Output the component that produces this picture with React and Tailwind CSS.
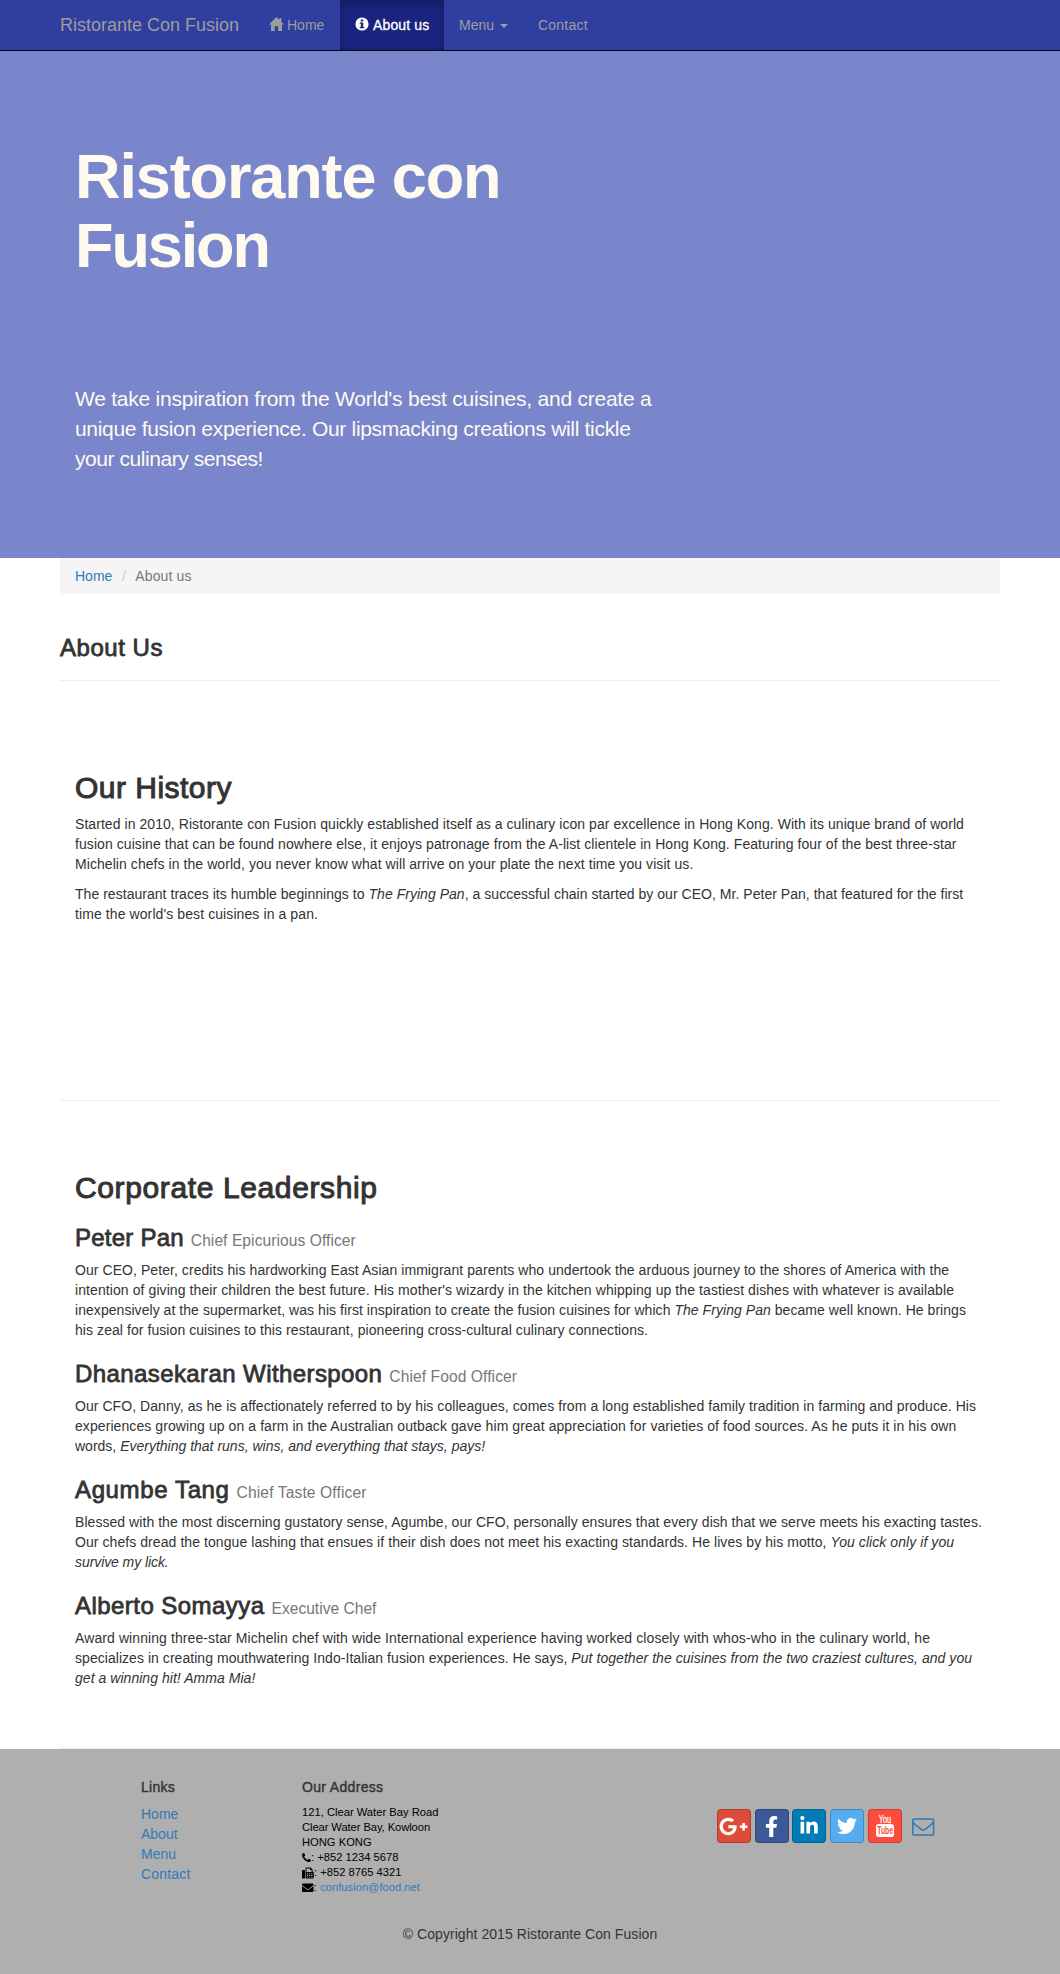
import React from "react";
import { FaFacebookF, FaGooglePlusG, FaLinkedinIn, FaTwitter, FaEnvelope } from "react-icons/fa";

function HomeIcon() {
  return (
    <svg viewBox="0 0 15 14" className="h-[14px] w-[15px] shrink-0" fill="currentColor">
      <path d="M7.5 0 0 7.6h2V14h3.7V9.2h3.4V14h3.9V7.6h2L12.4 5V1h-2v2z" />
    </svg>
  );
}

function InfoIcon() {
  return (
    <svg viewBox="0 0 14 14" className="h-[14px] w-[14px] shrink-0" fill="currentColor">
      <path fillRule="evenodd" d="M7 .4a6.6 6.6 0 1 0 0 13.2A6.6 6.6 0 0 0 7 .4zM5.8 2.4h2.4v2.1H5.8zM4.7 5.5h3.5v4.4h1.1v1.3H4.7V9.9h1.1V6.8H4.7z" />
    </svg>
  );
}

function PhoneIcon() {
  return (
    <svg viewBox="192 128 1408 1408" className="h-[9px] w-[9px]" fill="currentColor">
      <path d="M1600 1240q0 27-10 70.5t-21 68.5q-21 50-122 106-94 51-186 51-27 0-53-3.5t-57.5-12.5-47-14.5T1048 1485.5t-49-18.5q-98-35-175-83-127-79-264-216T344 904q-48-77-83-175-3-9-18-49t-20.5-55.5T208 577t-12.5-57.5T192 466q0-92 51-186 56-101 106-122 25-11 68.5-21t70.5-10q14 0 21 3 18 6 53 76 11 19 30 54t35 63.5 31 53.5q3 4 17.5 25t21.5 35.5 7 28.5q0 20-28.5 50t-62 55-62 53-28.5 46q0 9 5 22.5t8.5 20.5 14 24 11.5 19q76 137 174 235t235 174q2 1 19 11.5t24 14 20.5 8.5 22.5 5q18 0 46-28.5t53-62 55-62 50-28.5q14 0 28.5 7t35.5 21.5 25 17.5q25 15 53.5 31t63.5 35 54 30q70 35 76 53 3 7 3 21z" />
    </svg>
  );
}

function FaxIcon() {
  return (
    <svg viewBox="0 0 12 12" className="h-[12px] w-[12px]" fill="currentColor">
      <path d="M.8 3h1.4q.8 0 .8.8v6.9q0 .8-.8.8H.8q-.8 0-.8-.8V3.800Q0 3 .8 3z" />
      <path fillRule="evenodd" d="M3.6.5h5l1.900 1.900V4.500q1.300.3 1.300 1.300v4.500q0 1.200-1.200 1.200H3.600zM4.500 1.400v3.600h5.100V3.100H8V1.400zM5 6.200v1h1.200v-1zm2.100 0v1h1.200v-1zm2.100 0v1h1.200v-1zM5 8v1h1.200V8zm2.100 0v1h1.200V8zm2.100 0v1h1.200V8zM5 9.700v.9h1.200v-.9zm2.100 0v.9h1.200v-.9zm2.100 0v.9h1.200v-.9z" />
    </svg>
  );
}

function EnvelopeOutline() {
  return (
    <svg viewBox="0 0 1792 1792" className="h-[22.400px] w-[22.400px]" fill="currentColor">
      <path d="M1664 1504V736q-32 36-69 66-268 206-426 338-51 43-83 67t-86.500 48.500T897 1280h-2q-48 0-102.500-24.500T706 1207t-83-67Q465 1008 197 802q-37-30-69-66v768q0 13 9.500 22.500t22.500 9.500h1472q13 0 22.500-9.500t9.500-22.500zm0-1051v-24.500l-.5-13-3-12.500-5.500-9-9-7.500-14-2.500H160q-13 0-22.500 9.500T128 416q0 168 147 284 193 152 401 317 6 5 35 29.500t46 37.500 44.500 31.500T852 1143t43 9h2q20 0 43-9t50.500-27.500T1035 1084t46-37.500 35-29.500q208-165 401-317 54-43 100.500-115.500T1664 453zm128-37v1088q0 66-47 113t-113 47H160q-66 0-113-47T0 1504V416q0-66 47-113t113-47h1472q66 0 113 47t47 113z" />
    </svg>
  );
}

function YouTubeIcon() {
  return (
    <svg viewBox="0 0 32 32" className="h-[32px] w-[32px] shrink-0 overflow-visible" fontFamily="Liberation Sans, sans-serif">
      <text transform="translate(9.800 12.800) scale(0.660 1)" fontSize="11" fill="#fff" stroke="#fff" strokeWidth="0.300">You</text>
      <rect x="7" y="13.900" width="18" height="13.200" rx="2.800" fill="#fff" />
      <text transform="translate(8.300 24.400) scale(0.620 1)" fontSize="11" fontWeight="bold" fill="#ff4b3b">Tube</text>
    </svg>
  );
}

function Line({ children, className }) {
  return <span className={"block " + className}>{children}</span>;
}

function Leader({ name, title, nameClass, titleClass, children }) {
  return (
    <article className="mt-5">
      <h3 className="mb-[9px] h-[27px] pt-px text-[24px] leading-[26px]">
        <span className={"[-webkit-text-stroke:0.800px_#333] " + nameClass}>{name}</span>
        <span className={"ml-[7px] text-[15.600px] text-[#777] " + titleClass}>{title}</span>
      </h3>
      <p>{children}</p>
    </article>
  );
}

function Social({ className, children }) {
  return (
    <a className={"flex h-[34px] w-[34px] shrink-0 items-center justify-center rounded-[4px] border border-black/20 text-white " + className}>
      {children}
    </a>
  );
}

export default function App() {
  return (
    <div className="w-[1060px] overflow-hidden bg-white font-['Liberation_Sans',Arial,sans-serif] text-[14px] leading-5 whitespace-nowrap text-[#333]">
      <nav className="flex h-[51px] items-start border-b border-[#080808] bg-[#303f9f] pl-[60px] text-[#9d9d9d]">
        <a className="w-[209px] pt-[15px] text-[18px]">Ristorante Con Fusion</a>
        <a className="flex w-[71px] gap-[3px] pt-[15px]">
          <span className="pt-[2px]"><HomeIcon /></span>Home
        </a>
        <a className="flex h-[50px] w-[104px] gap-[4px] bg-[#1a237e] pt-[15px] pl-[15px] tracking-[0.140px] text-white shadow-[inset_0_3px_9px_rgba(0,0,0,0.250)] [-webkit-text-stroke:0.300px_#fff]">
          <span className="pt-[2px]"><InfoIcon /></span>About us
        </a>
        <a className="flex w-[94px] pt-[15px] pl-[15px]">
          Menu
          <span className="mt-[9px] ml-[6px] h-0 w-0 border-x-4 border-t-4 border-x-transparent border-t-[#9d9d9d]" />
        </a>
        <a className="pt-[15px] tracking-[0.220px]">Contact</a>
      </nav>

      <header className="h-[507px] bg-[#7986cb] pl-[75px] text-[#fffaf0]">
        <h1 className="pt-[91px] text-[63px] leading-[69px] font-bold">
          <Line className="tracking-[-1.120px]">Ristorante con</Line>
          <Line className="tracking-[-2.100px]">Fusion</Line>
        </h1>
        <div className="pt-[104px] text-[21px] leading-[30px]">
          <Line className="tracking-[-0.236px]">We take inspiration from the World's best cuisines, and create a</Line>
          <Line className="tracking-[-0.316px]">unique fusion experience. Our lipsmacking creations will tickle</Line>
          <Line className="tracking-[-0.440px]">your culinary senses!</Line>
        </div>
      </header>

      <main className="mx-[60px]">
        <div className="flex h-9 items-center rounded-[4px] bg-[#f5f5f5] px-[15px]">
          <a className="text-[#337ab7]">Home</a>
          <span className="w-[23px] text-center text-[#ccc]">/</span>
          <span className="tracking-[0.110px] text-[#777]">About us</span>
        </div>
        <h3 className="mt-[41px] h-[45px] text-[24px] leading-[26px] tracking-[0.535px] [-webkit-text-stroke:0.800px_#333]">About Us</h3>

        <section className="h-[420px] border-t border-[#eee] pt-[90px] pl-[15px]">
          <h2 className="mb-2.5 text-[30px] leading-[33px] tracking-[0.480px] [-webkit-text-stroke:1px_#333]">Our History</h2>
          <p>
            <Line className="tracking-[0.061px]">Started in 2010, Ristorante con Fusion quickly established itself as a culinary icon par excellence in Hong Kong. With its unique brand of world</Line>
            <Line className="tracking-[0.069px]">fusion cuisine that can be found nowhere else, it enjoys patronage from the A-list clientele in Hong Kong. Featuring four of the best three-star</Line>
            <Line className="tracking-[0.066px]">Michelin chefs in the world, you never know what will arrive on your plate the next time you visit us.</Line>
          </p>
          <p className="mt-2.5">
            <Line className="tracking-[0.035px]">The restaurant traces its humble beginnings to <i>The Frying Pan</i>, a successful chain started by our CEO, Mr. Peter Pan, that featured for the first</Line>
            <Line className="tracking-[0.094px]">time the world's best cuisines in a pan.</Line>
          </p>
        </section>

        <section className="h-[649px] border-y border-[#eee] pt-[70px] pl-[15px]">
          <h2 className="text-[30px] leading-[33px] tracking-[0.620px] [-webkit-text-stroke:1px_#333]">Corporate Leadership</h2>
          <Leader name="Peter Pan" title="Chief Epicurious Officer" nameClass="tracking-[0.230px]" titleClass="tracking-[0.060px]">
            <Line className="tracking-[0.065px]">Our CEO, Peter, credits his hardworking East Asian immigrant parents who undertook the arduous journey to the shores of America with the</Line>
            <Line className="tracking-[0.086px]">intention of giving their children the best future. His mother's wizardy in the kitchen whipping up the tastiest dishes with whatever is available</Line>
            <Line className="tracking-[0.049px]">inexpensively at the supermarket, was his first inspiration to create the fusion cuisines for which <i>The Frying Pan</i> became well known. He brings</Line>
            <Line className="tracking-[0.068px]">his zeal for fusion cuisines to this restaurant, pioneering cross-cultural culinary connections.</Line>
          </Leader>
          <Leader name="Dhanasekaran Witherspoon" title="Chief Food Officer" nameClass="tracking-[0.410px]" titleClass="tracking-[0.080px]">
            <Line className="tracking-[0.057px]">Our CFO, Danny, as he is affectionately referred to by his colleagues, comes from a long established family tradition in farming and produce. His</Line>
            <Line className="tracking-[0.080px]">experiences growing up on a farm in the Australian outback gave him great appreciation for varieties of food sources. As he puts it in his own</Line>
            <Line className="tracking-normal">words, <i>Everything that runs, wins, and everything that stays, pays!</i></Line>
          </Leader>
          <Leader name="Agumbe Tang" title="Chief Taste Officer" nameClass="tracking-[0.627px]" titleClass="tracking-[0.120px]">
            <Line className="tracking-[0.052px]">Blessed with the most discerning gustatory sense, Agumbe, our CFO, personally ensures that every dish that we serve meets his exacting tastes.</Line>
            <Line className="tracking-[0.069px]">Our chefs dread the tongue lashing that ensues if their dish does not meet his exacting standards. He lives by his motto, <i>You click only if you</i></Line>
            <Line className="tracking-[-0.080px]"><i>survive my lick.</i></Line>
          </Leader>
          <Leader name="Alberto Somayya" title="Executive Chef" nameClass="tracking-[0.450px]" titleClass="tracking-normal">
            <Line className="tracking-[0.093px]">Award winning three-star Michelin chef with wide International experience having worked closely with whos-who in the culinary world, he</Line>
            <Line className="tracking-[0.047px]">specializes in creating mouthwatering Indo-Italian fusion experiences. He says, <i>Put together the cuisines from the two craziest cultures, and you</i></Line>
            <Line className="tracking-[0.040px]"><i>get a winning hit! Amma Mia!</i></Line>
          </Leader>
        </section>
      </main>

      <footer className="h-[225px] bg-[#afafaf] pt-7">
        <div className="flex h-[147px] pl-[141px]">
          <div className="w-[161px]">
            <h5 className="mb-[7px] tracking-[0.263px] [-webkit-text-stroke:0.400px_#333]">Links</h5>
            <ul className="text-[#337ab7]">
              <li>Home</li>
              <li>About</li>
              <li>Menu</li>
              <li className="tracking-[0.180px]">Contact</li>
            </ul>
          </div>
          <div className="w-[415px]">
            <h5 className="mb-2 tracking-[0.330px] [-webkit-text-stroke:0.400px_#333]">Our Address</h5>
            <address className="text-[11.200px] leading-[15px] text-black not-italic">
              <Line className="tracking-normal">121, Clear Water Bay Road</Line>
              <Line className="tracking-[-0.080px]">Clear Water Bay, Kowloon</Line>
              <Line className="tracking-normal">HONG KONG</Line>
              <span className="flex h-[15px] items-center"><PhoneIcon />: +852 1234 5678</span>
              <span className="flex h-[15px] items-center"><FaxIcon />: +852 8765 4321</span>
              <span className="flex h-[15px] items-center">
                <FaEnvelope className="h-[11.500px] w-[11.500px]" />:&nbsp;<a className="ml-[0.500px] text-[#337ab7]">confusion@food.net</a>
              </span>
            </address>
          </div>
          <div className="mt-8 flex h-[34px] items-center gap-[3.700px]">
            <Social className="bg-[#dd4b39]"><FaGooglePlusG className="-ml-px h-[29px] w-[29px]" /></Social>
            <Social className="bg-[#3b5998]"><FaFacebookF className="h-[21px] w-[21px]" /></Social>
            <Social className="bg-[#007bb6]"><FaLinkedinIn className="h-[20px] w-[20px]" /></Social>
            <Social className="bg-[#55acee]"><FaTwitter className="h-[20px] w-[20px]" /></Social>
            <Social className="bg-[#ff4b3b]"><YouTubeIcon /></Social>
            <a className="ml-[7px] pt-px text-[#337ab7]"><EnvelopeOutline /></a>
          </div>
        </div>
        <p className="text-center tracking-[0.057px]">© Copyright 2015 Ristorante Con Fusion</p>
      </footer>
    </div>
  );
}
